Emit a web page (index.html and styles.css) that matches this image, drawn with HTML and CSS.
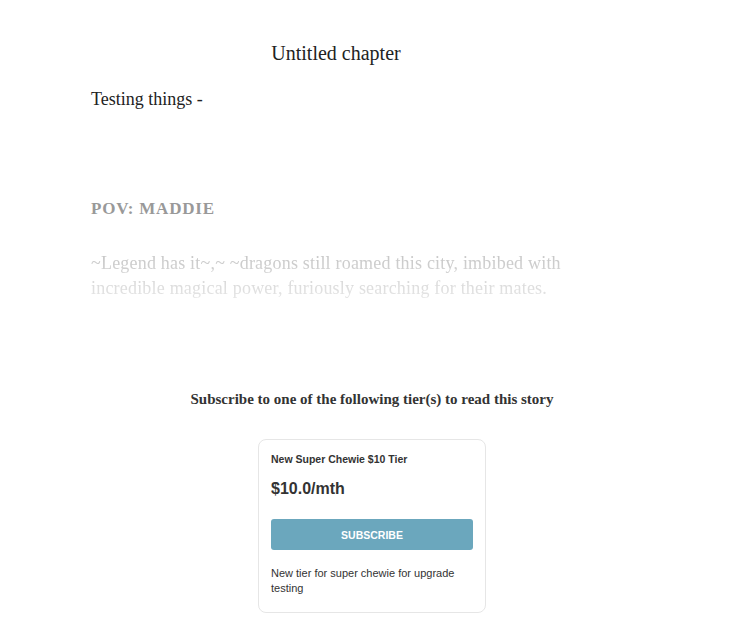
FILE: index.html
```html
<!DOCTYPE html>
<html lang="en">
<head>
  <meta charset="UTF-8" />
  <meta name="viewport" content="width=device-width, initial-scale=1.0" />
  <title>Untitled chapter</title>
  <link rel="stylesheet" href="styles.css">
</head>
<body>
  <div class="page">
    <div class="chapter">
      <h1 class="chapter-title">Untitled chapter</h1>
      <p class="intro">Testing things -</p>

      <p class="pov">POV: MADDIE</p>

      <div class="preview">
        <p>~Legend has it~,~ ~dragons still roamed this city, imbibed with incredible magical power, furiously searching for their mates.</p>
      </div>
    </div>

    <div class="paywall">
      <h2>Subscribe to one of the following tier(s) to read this story</h2>

      <div class="tier">
        <div class="tier-name">New Super Chewie $10 Tier</div>
        <div class="tier-price">$10.0/mth</div>
        <button class="tier-button">SUBSCRIBE</button>
        <p class="tier-desc">New tier for super chewie for upgrade testing</p>
      </div>
    </div>
  </div>
</body>
</html>
```

FILE: styles.css
```css
body {
  margin: 0;
  background: #fff;
}
.page {
  width: 744px;
}
.chapter {
  width: 490px;
  margin-left: 91px;
  padding-top: 40px;
  font-family: "Liberation Serif", serif;
  color: #222;
}
.chapter-title {
  font-size: 20px;
  font-weight: normal;
  text-align: center;
  margin: 0;
  line-height: 26px;
}
.intro {
  font-size: 18px;
  line-height: 25px;
  margin: 21px 0 0;
}
.pov {
  font-size: 17px;
  font-weight: bold;
  letter-spacing: 0.8px;
  color: #999;
  margin: 84px 0 0;
  line-height: 25px;
}
.preview {
  margin-top: 30px;
  -webkit-mask-image: linear-gradient(to bottom, rgba(0, 0, 0, 1), rgba(0, 0, 0, 0.4));
  mask-image: linear-gradient(to bottom, rgba(0, 0, 0, 1), rgba(0, 0, 0, 0.4));
}
.preview p {
  font-size: 18px;
  line-height: 25px;
  letter-spacing: 0.2px;
  color: #c4c4c4;
  margin: 0;
}
.paywall {
  display: flex;
  flex-direction: column;
  align-items: center;
  margin-top: 88px;
}
.paywall h2 {
  font-family: "Liberation Serif", serif;
  font-size: 15px;
  font-weight: bold;
  color: #333;
  margin: 0;
  line-height: 20px;
}
.tier {
  width: 228px;
  box-sizing: border-box;
  margin-top: 30px;
  padding: 12px 12px 16px;
  border: 1px solid #e6e6e6;
  border-radius: 8px;
  font-family: "Liberation Sans", Arial, sans-serif;
  color: #333;
}
.tier-name {
  font-size: 10.5px;
  font-weight: bold;
  line-height: 14px;
}
.tier-price {
  font-size: 16px;
  font-weight: bold;
  margin-top: 13px;
  line-height: 20px;
}
.tier-button {
  display: block;
  width: 100%;
  height: 31px;
  margin-top: 20px;
  border: none;
  border-radius: 3px;
  background: #6ba7bd;
  color: #fff;
  font-family: "Liberation Sans", Arial, sans-serif;
  font-size: 10.5px;
  font-weight: bold;
}
.tier-desc {
  font-size: 11px;
  line-height: 15px;
  margin: 16px 0 0;
}
```
